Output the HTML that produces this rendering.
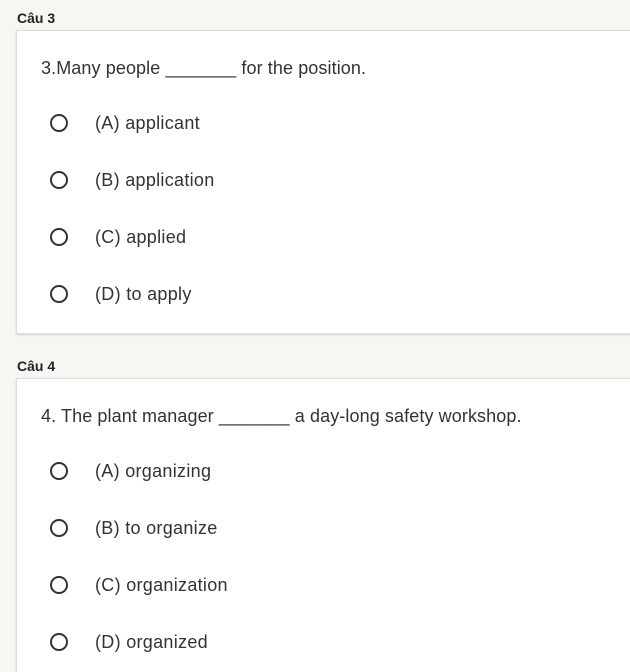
<!DOCTYPE html>
<html style="overflow:hidden;height:672px"><head><style>
body{margin:0;width:630px;height:672px;background:#f6f6f3;font-family:"Liberation Sans",sans-serif;color:#202124;position:relative;overflow:hidden}
.h{position:absolute;left:17px;font-size:14px;font-weight:bold;color:#222}
.card{position:absolute;left:16px;width:640px;background:#fff;border:1px solid #ddd;box-shadow:0 1px 2px rgba(0,0,0,.15)}
.q{position:absolute;left:24px;font-size:18px;color:#333;white-space:nowrap;letter-spacing:0.1px}
.o{position:absolute;left:33px;height:20px;font-size:18px;color:#333;line-height:20px}
.o i{position:absolute;left:0;top:1px;width:14px;height:14px;border:2px solid #333;border-radius:50%}
.o span{position:absolute;left:45px;white-space:nowrap;letter-spacing:0.3px}
</style></head><body>
<div class="h" style="top:10px">Câu 3</div>
<div class="card" style="top:30px;height:302px">
<div class="q" style="top:27px">3.Many people _______ for the position.</div>
<div class="o" style="top:82px"><i></i><span>(A) applicant</span></div>
<div class="o" style="top:139px"><i></i><span>(B) application</span></div>
<div class="o" style="top:196px"><i></i><span>(C) applied</span></div>
<div class="o" style="top:253px"><i></i><span>(D) to apply</span></div>
</div>
<div class="h" style="top:358px">Câu 4</div>
<div class="card" style="top:378px;height:320px">
<div class="q" style="top:27px">4. The plant manager _______ a day-long safety workshop.</div>
<div class="o" style="top:82px"><i></i><span>(A) organizing</span></div>
<div class="o" style="top:139px"><i></i><span>(B) to organize</span></div>
<div class="o" style="top:196px"><i></i><span>(C) organization</span></div>
<div class="o" style="top:253px"><i></i><span>(D) organized</span></div>
</div>
</body></html>
